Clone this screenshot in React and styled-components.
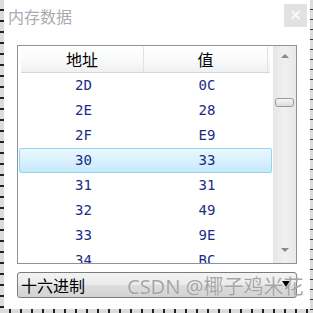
import React from "react";
import styled, { createGlobalStyle } from "styled-components";

const Global = createGlobalStyle`
  html, body { margin: 0; padding: 0; background: #dedede; }
  body { font-family: "Noto Sans CJK SC", "Noto Sans", sans-serif; }
`;

const Page = styled.div`
  width: 313px;
  height: 313px;
  box-sizing: border-box;
  padding: 0 3px 4px 4px;
  background:
    repeating-linear-gradient(180deg, transparent 0 9px, #222 9px 11px) 0 0 / 4px 100% no-repeat,
    repeating-linear-gradient(180deg, transparent 0 9px, #333 9px 10px) 310px 0 / 3px 100% no-repeat,
    repeating-linear-gradient(90deg, transparent 0 9px, #222 9px 11px) 0 309px / 100% 4px no-repeat,
    #dcdcdc;
  position: relative;
`;

const Window = styled.div`
  width: 306px;
  height: 309px;
  background: #ffffff;
  box-sizing: border-box;
  padding: 0 13px 0 13px;
  display: flex;
  flex-direction: column;
`;

const TitleBar = styled.div`
  height: 45px;
  display: flex;
  align-items: flex-start;
  justify-content: space-between;
  margin: 0 -10px 0 -10px;
`;

const Title = styled.div`
  margin-top: 5px;
  margin-left: 1px;
  font-size: 16px;
  line-height: 22px;
  color: #a8abb2;
`;

const CloseBtn = styled.div`
  margin-top: 4px;
  width: 23px;
  height: 23px;
  background: #e2e2e2;
  color: #ffffff;
  font-family: "DejaVu Sans", sans-serif;
  font-size: 15px;
  line-height: 23px;
  text-align: center;
`;

const ListBox = styled.div`
  height: 219px;
  box-sizing: border-box;
  border: 1px solid #8f9298;
  display: flex;
  overflow: hidden;
`;

const Content = styled.div`
  width: 256px;
  display: flex;
  flex-direction: column;
  overflow: hidden;
`;

const Header = styled.div`
  margin: 1px 3px 0 3px;
  height: 25px;
  display: grid;
  grid-template-columns: 123px 124px 1fr;
  background: linear-gradient(180deg, #ffffff 0%, #fafbfc 50%, #eff0f2 100%);
  border-bottom: 1px solid #d5d5d5;
`;

const HeadCell = styled.div`
  font-size: 16px;
  line-height: 25px;
  text-align: center;
  color: #000;
  border-right: ${(p) => (p.$sep ? "1px solid #dfe2e6" : "none")};
`;

const Row = styled.div`
  margin: 0 1px;
  height: 25px;
  box-sizing: border-box;
  display: grid;
  grid-template-columns: 2px 123px 124px 1fr;
  border: 1px solid ${(p) => (p.$sel ? "#8fd6f3" : "transparent")};
  border-radius: 2px;
  background: ${(p) =>
    p.$sel ? "linear-gradient(180deg, #eaf7fe 0%, #d8f0fc 55%, #c6e9fb 100%)" : "transparent"};
  flex-shrink: 0;
`;

const Cell = styled.div`
  font-family: "DejaVu Sans Mono", monospace;
  font-size: 14px;
  line-height: 23px;
  text-align: center;
  color: #1b2c86;
`;

const ScrollBar = styled.div`
  width: 23px;
  background: linear-gradient(90deg, #e6e6e6 0%, #f0f0f0 50%, #e8e8e8 100%);
  position: relative;
  display: flex;
  flex-direction: column;
  align-items: center;
`;

const Arrow = styled.div`
  width: 0;
  height: 0;
  border-left: 4px solid transparent;
  border-right: 4px solid transparent;
  ${(p) =>
    p.$down
      ? "border-top: 4px solid #8a8a8a; margin-top: auto; margin-bottom: 11px;"
      : "border-bottom: 4px solid #8a8a8a; margin-top: 8px;"}
`;

const Thumb = styled.div`
  position: absolute;
  top: 52px;
  left: 2px;
  width: 17px;
  height: 7px;
  border: 1px solid #9a9a9a;
  border-radius: 3px;
  background: linear-gradient(180deg, #f6f6f6 0%, #dcdcdc 100%);
`;

const Combo = styled.div`
  margin-top: 8px;
  height: 26px;
  box-sizing: border-box;
  border: 1px solid #7c7c7c;
  border-radius: 3px;
  background: linear-gradient(180deg, #f3f3f3 0%, #ebebeb 50%, #dddddd 51%, #d3d3d3 100%);
  display: flex;
  align-items: center;
  justify-content: space-between;
  padding: 0 6px 0 3px;
`;

const ComboText = styled.div`
  font-size: 16px;
  line-height: 24px;
  color: #000;
`;

const ComboArrow = styled.div`
  width: 0;
  height: 0;
  border-left: 4px solid transparent;
  border-right: 4px solid transparent;
  border-top: 6px solid #000;
  margin-top: -2px;
`;

const Watermark = styled.div`
  position: absolute;
  left: 127px;
  top: 274px;
  font-size: 20px;
  line-height: 26px;
  color: rgba(150, 150, 150, 0.85);
  text-shadow: 0 0 1px rgba(255, 255, 255, 0.8);
  white-space: nowrap;
  font-family: "Noto Sans", "Noto Sans CJK SC", sans-serif;
`;

const rows = [
  ["2D", "0C"],
  ["2E", "28"],
  ["2F", "E9"],
  ["30", "33"],
  ["31", "31"],
  ["32", "49"],
  ["33", "9E"],
  ["34", "BC"],
];

export default function App() {
  return (
    <>
      <Global />
      <Page>
        <Window>
          <TitleBar>
            <Title>内存数据</Title>
            <CloseBtn>×</CloseBtn>
          </TitleBar>
          <ListBox>
            <Content>
              <Header>
                <HeadCell $sep>地址</HeadCell>
                <HeadCell $sep>值</HeadCell>
                <HeadCell />
              </Header>
              {rows.map(([a, v], i) => (
                <Row key={a} $sel={i === 3}>
                  <span />
                  <Cell>{a}</Cell>
                  <Cell>{v}</Cell>
                </Row>
              ))}
            </Content>
            <ScrollBar>
              <Arrow />
              <Thumb />
              <Arrow $down />
            </ScrollBar>
          </ListBox>
          <Combo>
            <ComboText>十六进制</ComboText>
            <ComboArrow />
          </Combo>
        </Window>
        <Watermark>CSDN @椰子鸡米花</Watermark>
      </Page>
    </>
  );
}
